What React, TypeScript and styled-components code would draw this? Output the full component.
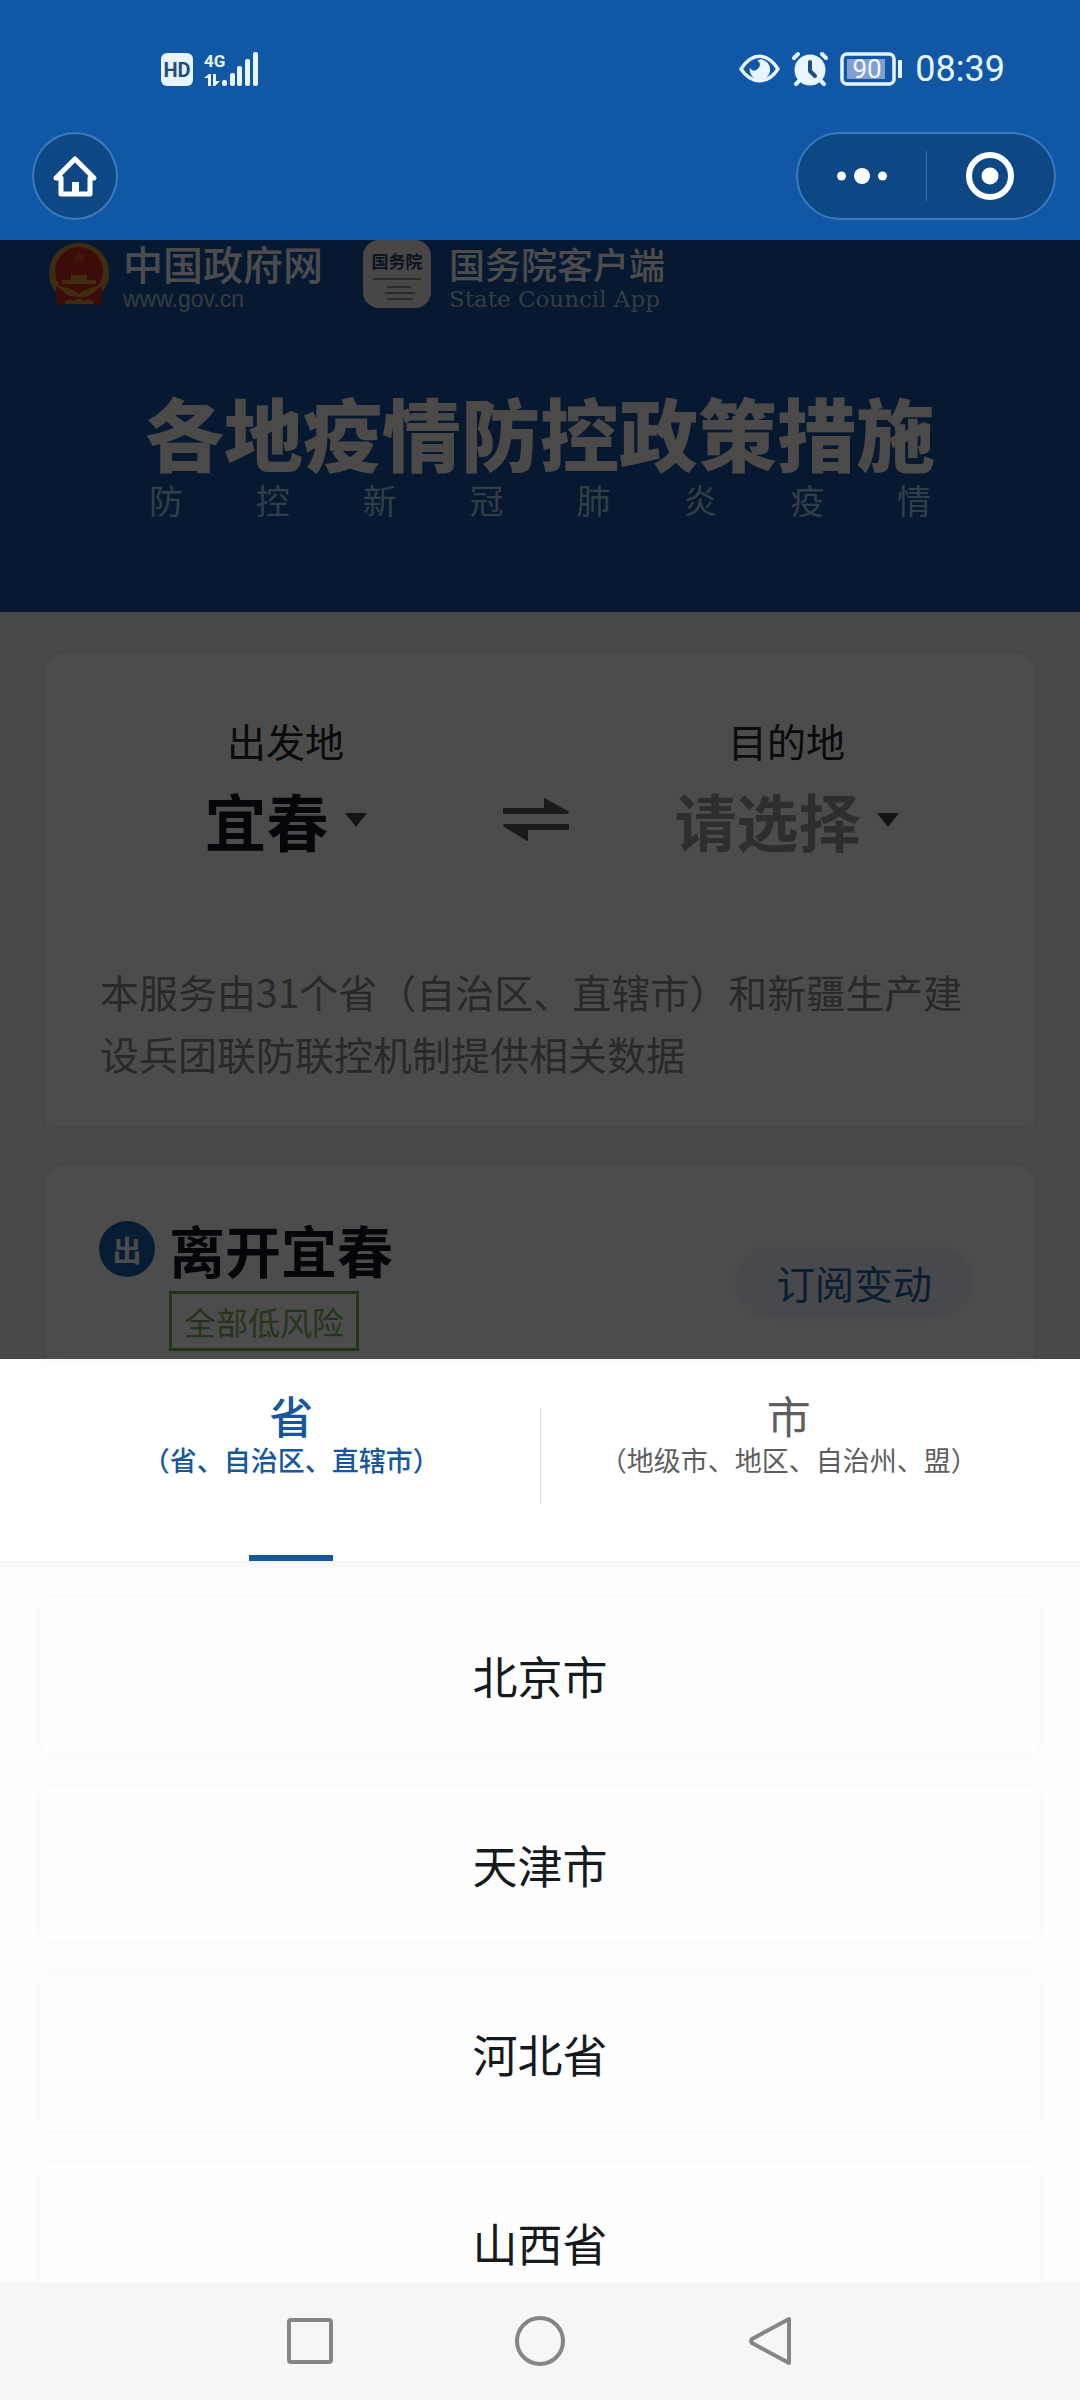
import React, { useState } from "react";
import styled, { createGlobalStyle } from "styled-components";

const sans = `"Liberation Sans", "Noto Sans CJK SC", sans-serif`;
const cjk = `"Noto Sans CJK SC", sans-serif`;

const GlobalStyle = createGlobalStyle`
  * { box-sizing: border-box; }
  html, body { margin: 0; background: #fdfdfd; }
  body { font-family: ${cjk}; }
  button { font: inherit; color: inherit; background: none; border: 0; padding: 0; cursor: pointer; }
  h1, h2, p, ul { margin: 0; padding: 0; }
  svg { display: block; flex: none; overflow: visible; }
`;

const Screen = styled.div`
  display: flex;
  flex-direction: column;
  height: 100vh;
  overflow: hidden;
`;

const TopArea = styled.header`
  flex: none;
  height: 240px;
  background: #1058a6;
  color: #e8f4ff;
`;

const StatusBar = styled.div`
  display: flex;
  align-items: center;
  justify-content: space-between;
  height: 132px;
  padding: 6px 75px 0 160px;
`;

const StatusGroup = styled.div`
  display: flex;
  align-items: center;
  gap: 12px;
`;

const Clock = styled.span`
  font: 400 36px/40px Roboto, sans-serif;
`;

const NavBar = styled.nav`
  display: flex;
  align-items: center;
  justify-content: space-between;
  padding: 0 24px 0 32px;
`;

const HomeButton = styled.button`
  display: flex;
  align-items: center;
  justify-content: center;
  width: 86px;
  height: 88px;
  border: 2px solid #3a79bb;
  border-radius: 50%;
  background: #0d4884;
`;

const Capsule = styled.div`
  display: flex;
  align-items: center;
  width: 260px;
  height: 88px;
  border: 2px solid #3a79bb;
  border-radius: 44px;
  background: #0d4884;
`;

const CapsuleButton = styled.button`
  flex: 1;
  display: flex;
  align-items: center;
  justify-content: center;
  height: 50px;

  & + & {
    border-left: 1px solid #3a6fa5;
  }
`;

const Dimmed = styled.main`
  position: relative;
  flex: none;
  background: #f4f5f8;

  &::after {
    content: "";
    position: absolute;
    inset: 0;
    background: rgba(0, 0, 0, 0.7);
  }
`;

const Hero = styled.section`
  height: 372px;
  background: #1454a0;
  color: #fff;
`;

const Brands = styled.div`
  display: flex;
  align-items: flex-start;
  padding-left: 49px;
`;

const BrandText = styled.div<{ $gap: number }>`
  display: flex;
  flex-direction: column;
  margin: 1px 0 0 ${(p) => p.$gap}px;
`;

const BrandName = styled.strong<{ $size: number }>`
  font-weight: 500;
  font-size: ${(p) => p.$size}px;
  line-height: 44px;
`;

const BrandSub = styled.span<{ $serif?: boolean }>`
  font-family: ${(p) => (p.$serif ? `"DejaVu Serif", serif` : sans)};
  font-size: 23px;
  line-height: 28px;
  color: #b9c8dc;
`;

const AppIcon = styled.span`
  display: flex;
  flex-direction: column;
  align-items: center;
  gap: 6px;
  width: 68px;
  height: 68px;
  margin-left: 40px;
  padding-top: 10px;
  border-radius: 16px;
  background: #f2efe8;
  color: #2a4568;
  font-size: 17px;
  font-weight: 700;
  line-height: 22px;
`;

const HeroTitle = styled.h1`
  margin-top: 71px;
  text-align: center;
  font-size: 79px;
  font-weight: 900;
  line-height: 96px;
  color: #fbf7f0;
`;

const HeroSub = styled.p`
  width: 782px;
  max-width: 90%;
  margin: 0 auto;
  font-size: 34px;
  line-height: 40px;
  color: #a8cdf0;
  text-align: justify;
  text-align-last: justify;
`;

const Cards = styled.div`
  display: flex;
  flex-direction: column;
  gap: 40px;
  padding: 42px 46px 0;
`;

const Card = styled.section`
  border-radius: 16px 16px 0 0;
  background: #fff;
  box-shadow: 0 0 12px rgba(60, 70, 120, 0.06);
`;

const Route = styled.div`
  display: grid;
  grid-template-columns: 1fr 66px 1fr;
  align-items: end;
  padding: 60px 30px 0 22px;
`;

const Place = styled.div`
  display: flex;
  flex-direction: column;
  align-items: center;
`;

const PlaceLabel = styled.span`
  font-size: 39px;
  line-height: 52px;
  color: #222;
`;

const PlaceButton = styled.button<{ $empty?: boolean }>`
  display: flex;
  align-items: center;
  gap: 16px;
  height: 108px;
  font-size: 62px;
  font-weight: 700;
  color: ${(p) => (p.$empty ? "#999" : "#0e1420")};
`;

const SwapButton = styled.button`
  display: flex;
  align-items: center;
  height: 108px;
`;

const Note = styled.p`
  padding: 86px 55px 42px 54px;
  font-size: 39px;
  line-height: 62px;
  color: #8c8a82;
`;

const Leave = styled.div`
  display: flex;
  align-items: center;
  justify-content: space-between;
  padding: 47px 62px 8px 53px;
`;

const LeaveInfo = styled.div`
  display: grid;
  grid-template-columns: 56px auto;
  gap: 6px 14px;
  align-items: center;
  justify-items: start;
`;

const Badge = styled.span`
  display: flex;
  align-items: center;
  justify-content: center;
  width: 56px;
  height: 56px;
  border-radius: 50%;
  background: #1862ac;
  color: #fff;
  font-size: 29px;
  font-weight: 700;
`;

const LeaveTitle = styled.h2`
  font-size: 56px;
  font-weight: 700;
  line-height: 72px;
  color: #101624;
`;

const Tag = styled.span`
  grid-column: 2;
  padding: 0 12px;
  border: 3px solid #76b043;
  font-size: 32px;
  line-height: 54px;
  color: #7cb35a;
`;

const SubscribeButton = styled.button`
  width: 236px;
  height: 70px;
  border-radius: 35px;
  background: #f1f5fd;
  box-shadow: 0 0 12px #f1f5fd;
  font-size: 39px;
  color: #2662a8;
`;

const Sheet = styled.section`
  flex: 1;
  min-height: 0;
  display: flex;
  flex-direction: column;
  background: #fdfdfd;
`;

const Tabs = styled.div`
  flex: none;
  display: flex;
  height: 202px;
  padding: 0 43px;
  background: #fff;
  box-shadow: 0 2px 8px rgba(0, 0, 0, 0.06);
`;

const Tab = styled.button<{ $active: boolean }>`
  flex: 1;
  display: flex;
  flex-direction: column;
  align-items: center;
  padding-top: 32px;
  color: ${(p) => (p.$active ? "#17589c" : "#5e5e5e")};

  &::after {
    content: "";
    width: 84px;
    height: 6px;
    margin-top: auto;
    background: ${(p) => (p.$active ? "#17589c" : "transparent")};
  }
`;

const TabName = styled.span<{ $active: boolean }>`
  font-size: 44px;
  line-height: 48px;
  font-weight: ${(p) => (p.$active ? 500 : 400)};
`;

const TabHint = styled.span<{ $active: boolean }>`
  font-size: 27px;
  line-height: 42px;
  font-weight: ${(p) => (p.$active ? 500 : 400)};
`;

const TabDivider = styled.span`
  width: 1px;
  height: 96px;
  margin-top: 49px;
  background: #dcdcdc;
`;

const List = styled.ul`
  display: flex;
  flex-direction: column;
  gap: 33px;
  flex: 1;
  min-height: 0;
  overflow: hidden;
  padding: 36px 40px 0;
  list-style: none;
`;

const ListItem = styled.li`
  flex: none;
`;

const ListButton = styled.button`
  width: 100%;
  height: 156px;
  border-radius: 12px;
  background: #fefefe;
  box-shadow: 0 0 6px rgba(0, 0, 0, 0.03);
  font-size: 45px;
  color: #141a1e;
`;

const SystemBar = styled.footer`
  flex: none;
  display: flex;
  align-items: center;
  justify-content: center;
  gap: 180px;
  height: 118px;
  background: #f6f6f7;
`;

const SystemButton = styled.button`
  display: flex;
  align-items: center;
  justify-content: center;
  width: 50px;
  height: 50px;
`;

const provinces = ["北京市", "天津市", "河北省", "山西省"];
const tabs = [
  { name: "省", hint: "（省、自治区、直辖市）" },
  { name: "市", hint: "（地级市、地区、自治州、盟）" },
];

const SignalIcon = () => (
  <svg width="98" height="34" viewBox="0 0 98 34" fill="#e8f4ff">
    <rect x="1" y="1" width="32" height="33" rx="6" />
    <text x="17" y="25" textAnchor="middle" fontFamily="Roboto, sans-serif" fontWeight="700" fontSize="20" fill="#1d4f7e">HD</text>
    <text x="44" y="15" fontFamily="Roboto, sans-serif" fontWeight="700" fontSize="17">4G</text>
    <path d="M44 26l5-4h2v12h-3v-8zM53 22h3v7h4l-5 5h-2z" />
    <rect x="62" y="28" width="5" height="6" rx="2" />
    <rect x="70" y="21" width="5" height="13" rx="2" />
    <rect x="77" y="14" width="5" height="20" rx="2" />
    <rect x="85" y="7" width="5" height="27" rx="2" />
    <rect x="93" y="0" width="5" height="34" rx="2" />
  </svg>
);

const EyeIcon = () => (
  <svg width="41" height="30" viewBox="0 0 42 30">
    <path d="M2 15C8 6 14 2 21 2s13 4 19 13c-6 9-12 12-19 12S8 24 2 15z" fill="none" stroke="#e8f4ff" strokeWidth="3.5" strokeLinejoin="round" />
    <path d="M22 5a10.500 10.500 0 1 1-11 9q4 5 8 1 5-4 0-9z" fill="#e8f4ff" />
  </svg>
);

const AlarmIcon = () => (
  <svg width="36" height="36" viewBox="0 0 36 36">
    <path d="M2 7l4-4M34 7l-4-4" stroke="#e8f4ff" strokeWidth="4" strokeLinecap="round" />
    <path d="M8 29l-4 4M28 29l4 4" stroke="#e8f4ff" strokeWidth="4" strokeLinecap="round" />
    <circle cx="18" cy="19" r="15.500" fill="#e8f4ff" />
    <path d="M18 11v9l5 5" fill="none" stroke="#1d4f7e" strokeWidth="4" strokeLinecap="round" strokeLinejoin="round" />
  </svg>
);

const BatteryIcon = () => (
  <svg width="63" height="34" viewBox="0 0 63 34">
    <rect x="2" y="2" width="52" height="30" rx="5" fill="none" stroke="#e8f4ff" strokeWidth="3.500" />
    <rect x="7" y="7" width="38" height="20" fill="#7f9fd0" />
    <text x="27" y="26" textAnchor="middle" fontFamily="Roboto, sans-serif" fontSize="26" fill="#f2f8ff">90</text>
    <rect x="58" y="8" width="4" height="18" rx="1" fill="#e8f4ff" />
  </svg>
);

const HomeIcon = () => (
  <svg width="44" height="42" viewBox="0 0 44 42">
    <path d="M3 23L22 4l19 19h-4v16H8V23z" fill="none" stroke="#fff" strokeWidth="5" strokeLinejoin="round" />
    <rect x="19" y="27" width="7" height="12" fill="#fff" />
  </svg>
);

const Emblem = () => (
  <svg width="60" height="68" viewBox="0 0 60 68">
    <circle cx="30" cy="33" r="30" fill="#d8983a" />
    <circle cx="30" cy="31" r="24" fill="#c8281e" />
    <path d="M7 46q9 6 23 6t23-6l-1 18q-4 3-9-1-13 3-26 0-5 4-9 1z" fill="#c8281e" />
    <path d="M22 35h16v5h9v4H13v-4h9z" fill="#d8983a" />
    <path d="M10 46q10 1 20 8 10-7 20-8-5 11-20 11T10 46zM16 61l5-2 4 2 5-3 5 3 4-2 5 2v3H16z" fill="#d8983a" />
    <path d="M30 10l2 5h5l-4 3 2 5-5-3-5 3 2-5-4-3h5z" fill="#d8502e" />
  </svg>
);

const Caret = () => (
  <svg width="22" height="14" viewBox="0 0 22 14">
    <path d="M0 0h22L11 14z" fill="#444" />
  </svg>
);

const SwapIcon = () => (
  <svg width="66" height="44" viewBox="0 0 66 44" fill="#54585c">
    <path d="M0 10h41V0q2 0 4 2l20 11q2 3-1 3H0z" />
    <path d="M66 32H25v11q-2 0-4-2L1 29q-2-3 1-3h64z" />
  </svg>
);

export default function App() {
  const [active, setActive] = useState(0);

  return (
    <>
      <GlobalStyle />
      <Screen>
        <TopArea>
          <StatusBar>
            <SignalIcon />
            <StatusGroup>
              <EyeIcon />
              <AlarmIcon />
              <BatteryIcon />
              <Clock>08:39</Clock>
            </StatusGroup>
          </StatusBar>
          <NavBar>
            <HomeButton aria-label="首页">
              <HomeIcon />
            </HomeButton>
            <Capsule>
              <CapsuleButton aria-label="更多">
                <svg width="50" height="16" viewBox="0 0 50 16" fill="#fff">
                  <circle cx="4.500" cy="8" r="4.500" />
                  <circle cx="25" cy="8" r="8" />
                  <circle cx="45.500" cy="8" r="4.500" />
                </svg>
              </CapsuleButton>
              <CapsuleButton aria-label="关闭">
                <svg width="48" height="48" viewBox="0 0 48 48">
                  <circle cx="24" cy="24" r="21" fill="none" stroke="#fff" strokeWidth="6" />
                  <circle cx="24" cy="24" r="8.500" fill="#fff" />
                </svg>
              </CapsuleButton>
            </Capsule>
          </NavBar>
        </TopArea>

        <Dimmed>
          <Hero>
            <Brands>
              <Emblem />
              <BrandText $gap={14}>
                <BrandName $size={40}>中国政府网</BrandName>
                <BrandSub>www.gov.cn</BrandSub>
              </BrandText>
              <AppIcon>
                国务院
                <svg width="48" height="24" viewBox="0 0 48 24" stroke="#8a8f94" strokeWidth="2">
                  <path d="M0 1h48M14 9h24M12 15h30M14 21h26" />
                </svg>
              </AppIcon>
              <BrandText $gap={18}>
                <BrandName $size={36}>国务院客户端</BrandName>
                <BrandSub $serif>State Council App</BrandSub>
              </BrandText>
            </Brands>
            <HeroTitle>各地疫情防控政策措施</HeroTitle>
            <HeroSub>防控新冠肺炎疫情</HeroSub>
          </Hero>

          <Cards>
            <Card>
              <Route>
                <Place>
                  <PlaceLabel>出发地</PlaceLabel>
                  <PlaceButton>
                    宜春
                    <Caret />
                  </PlaceButton>
                </Place>
                <SwapButton aria-label="交换">
                  <SwapIcon />
                </SwapButton>
                <Place>
                  <PlaceLabel>目的地</PlaceLabel>
                  <PlaceButton $empty>
                    请选择
                    <Caret />
                  </PlaceButton>
                </Place>
              </Route>
              <Note>本服务由31个省（自治区、直辖市）和新疆生产建设兵团联防联控机制提供相关数据</Note>
            </Card>
            <Card>
              <Leave>
                <LeaveInfo>
                  <Badge>出</Badge>
                  <LeaveTitle>离开宜春</LeaveTitle>
                  <Tag>全部低风险</Tag>
                </LeaveInfo>
                <SubscribeButton>订阅变动</SubscribeButton>
              </Leave>
            </Card>
          </Cards>
        </Dimmed>

        <Sheet>
          <Tabs role="tablist">
            {tabs.map((tab, i) => (
              <React.Fragment key={tab.name}>
                {i > 0 && <TabDivider />}
                <Tab role="tab" aria-selected={active === i} $active={active === i} onClick={() => setActive(i)}>
                  <TabName $active={active === i}>{tab.name}</TabName>
                  <TabHint $active={active === i}>{tab.hint}</TabHint>
                </Tab>
              </React.Fragment>
            ))}
          </Tabs>
          <List>
            {provinces.map((name) => (
              <ListItem key={name}>
                <ListButton>{name}</ListButton>
              </ListItem>
            ))}
          </List>
        </Sheet>

        <SystemBar>
          <SystemButton aria-label="最近任务">
            <svg width="46" height="46" viewBox="0 0 46 46">
              <rect x="2" y="2" width="42" height="42" rx="2" fill="none" stroke="#868686" strokeWidth="4" />
            </svg>
          </SystemButton>
          <SystemButton aria-label="主屏幕">
            <svg width="50" height="50" viewBox="0 0 50 50">
              <circle cx="25" cy="25" r="23" fill="none" stroke="#868686" strokeWidth="4" />
            </svg>
          </SystemButton>
          <SystemButton aria-label="返回">
            <svg width="44" height="50" viewBox="0 0 44 50">
              <path d="M41 3v44L4 27q-2-2 0-4z" fill="none" stroke="#868686" strokeWidth="4" strokeLinejoin="round" />
            </svg>
          </SystemButton>
        </SystemBar>
      </Screen>
    </>
  );
}
